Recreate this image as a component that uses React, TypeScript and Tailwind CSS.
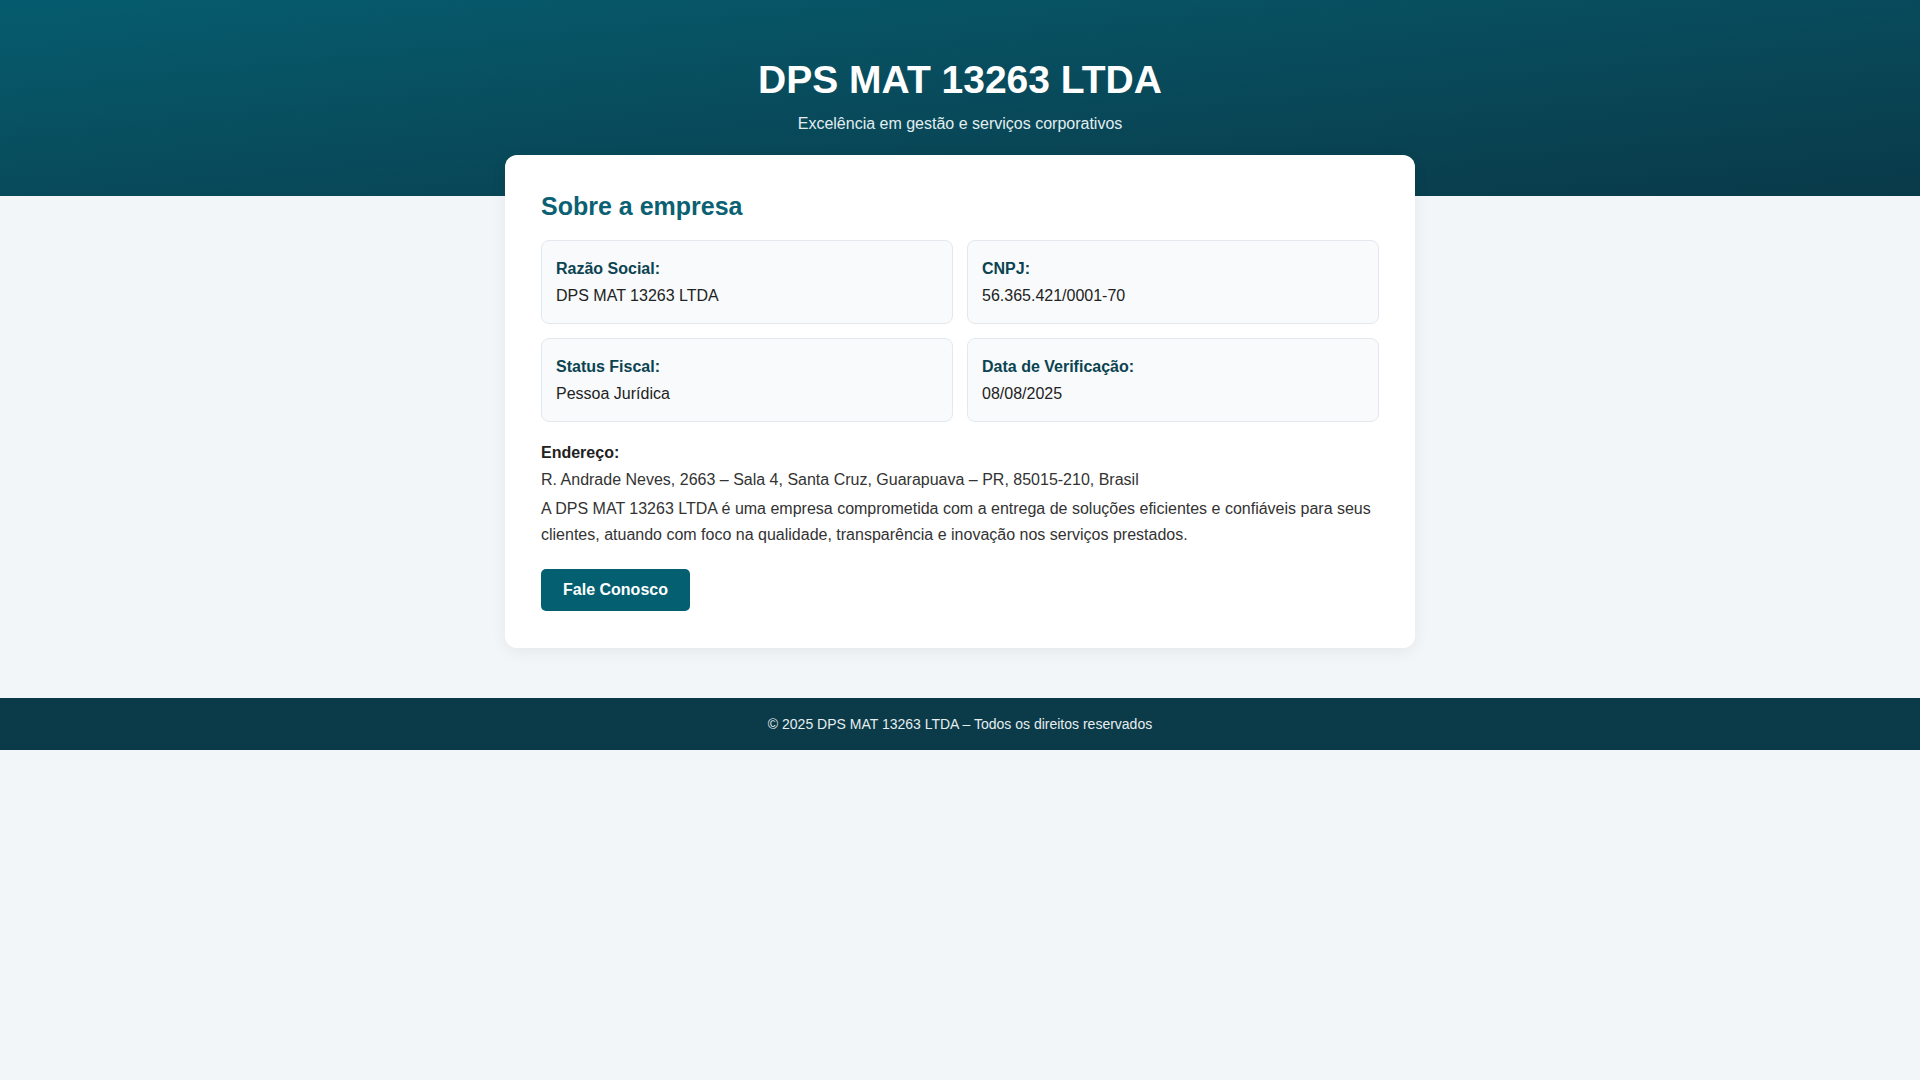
export default function App() {
  const f = { fontFamily: '"Liberation Sans", Arial, sans-serif' };
  const Box = ({ l, v }: { l: string; v: string }) => (
    <div className="bg-[#f8fafc] border border-[#e3e8ee] rounded-[8px] px-[14px] py-[14px] leading-[27px]">
      <div className="font-bold text-[#0b4350]">{l}</div>
      <div className="text-[#222]">{v}</div>
    </div>
  );
  return (
    <div style={f} className="min-h-[1080px] bg-[#f3f6f9] text-[16px]">
      <header className="h-[196px] bg-gradient-to-br from-[#055c6e] to-[#093a49] text-white text-center pt-[60px]">
        <h1 className="text-[39px] font-bold leading-[40px]">DPS MAT 13263 LTDA</h1>
        <p className="text-[16px] mt-[12px] text-[#e2eef1]">Excelência em gestão e serviços corporativos</p>
      </header>
      <main className="w-[910px] mx-auto -mt-[41px] bg-white rounded-[12px] shadow-[0_4px_16px_rgba(0,0,0,0.06)] px-[36px] pt-[36px] pb-[37px]">
        <h2 className="text-[25px] leading-[30px] font-bold text-[#0b6174] mb-[19px]">Sobre a empresa</h2>
        <div className="grid grid-cols-2 gap-[14px]">
          <Box l="Razão Social:" v="DPS MAT 13263 LTDA" />
          <Box l="CNPJ:" v="56.365.421/0001-70" />
          <Box l="Status Fiscal:" v="Pessoa Jurídica" />
          <Box l="Data de Verificação:" v="08/08/2025" />
        </div>
        <div className="mt-[17px] leading-[27px] text-[#333]">
          <div className="font-bold text-[#222]">Endereço:</div>
          <div>R. Andrade Neves, 2663 – Sala 4, Santa Cruz, Guarapuava – PR, 85015-210, Brasil</div>
          <p className="mt-[3px] leading-[26px]">A DPS MAT 13263 LTDA é uma empresa comprometida com a entrega de soluções eficientes e confiáveis para seus clientes, atuando com foco na qualidade, transparência e inovação nos serviços prestados.</p>
        </div>
        <button className="mt-[21px] h-[42px] w-[149px] rounded-[5px] bg-[#045f70] text-white font-bold">Fale Conosco</button>
      </main>
      <footer className="mt-[50px] h-[52px] bg-[#0b3a48] text-[#e6eef0] text-[14px] flex items-center justify-center">
        © 2025 DPS MAT 13263 LTDA – Todos os direitos reservados
      </footer>
    </div>
  );
}
